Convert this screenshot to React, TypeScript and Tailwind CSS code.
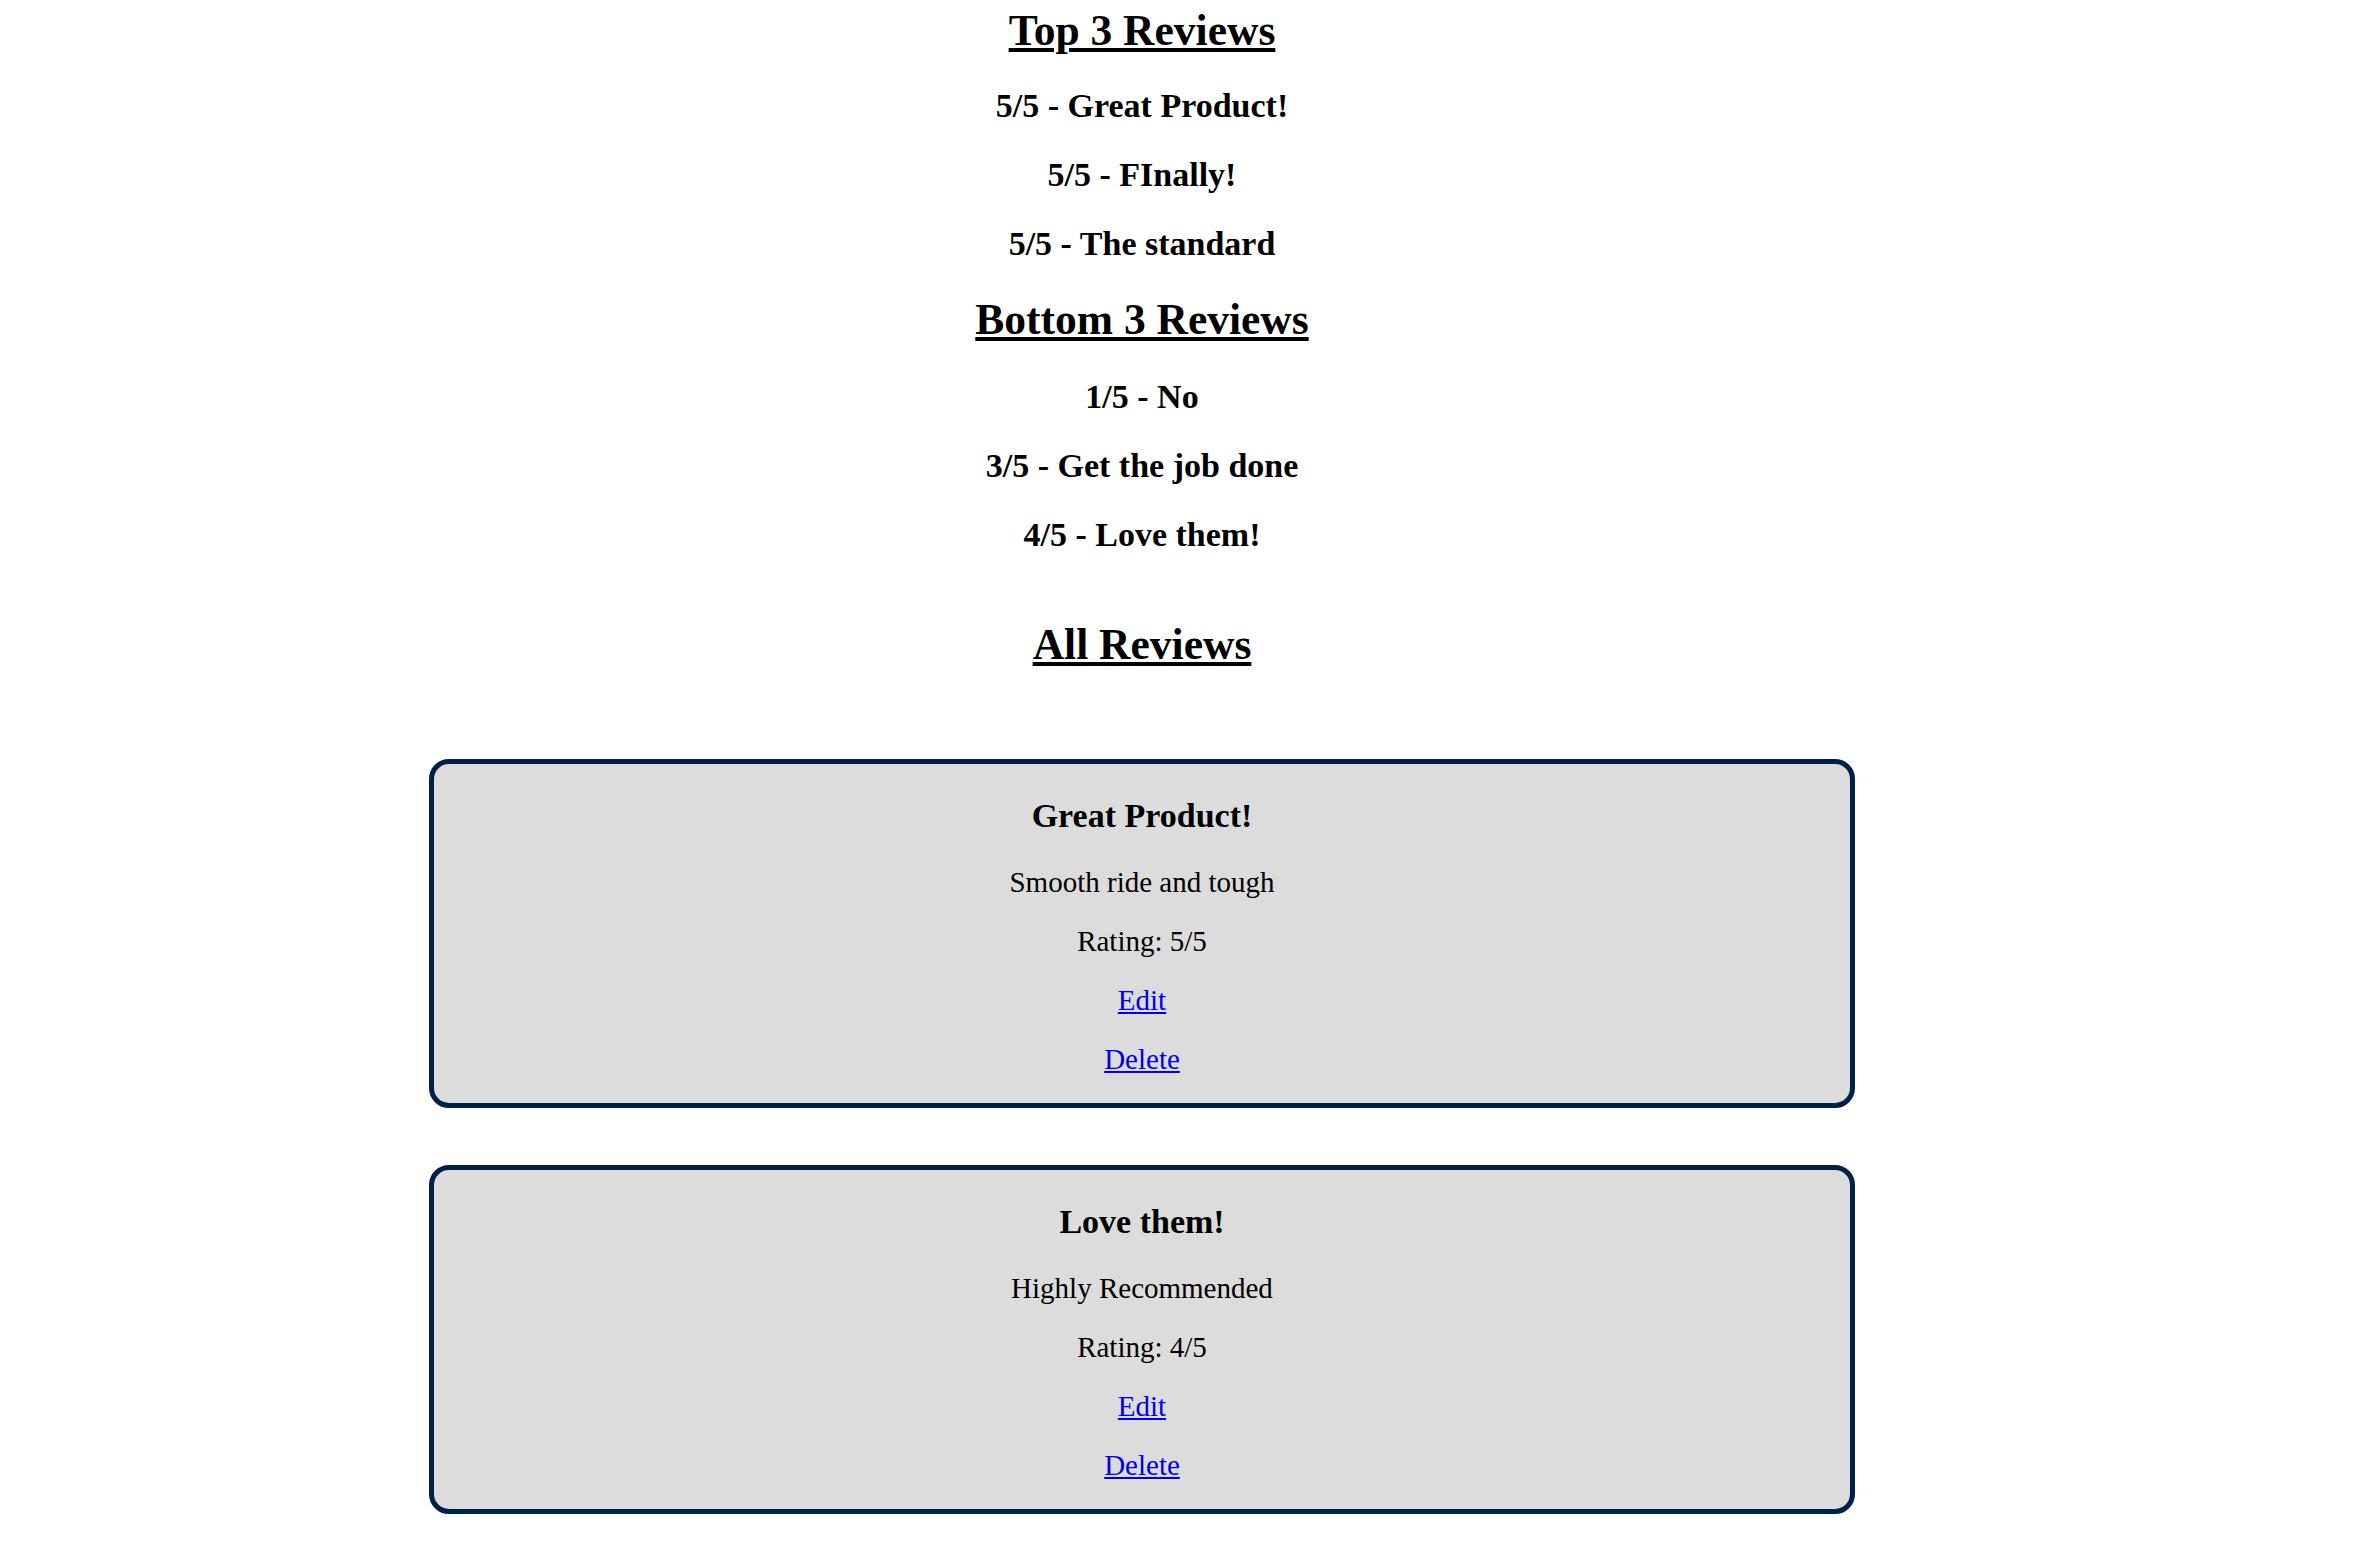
const top = ['5/5 - Great Product!', '5/5 - FInally!', '5/5 - The standard'];
const bottom = ['1/5 - No', '3/5 - Get the job done', '4/5 - Love them!'];

const reviews = [
  { title: 'Great Product!', body: 'Smooth ride and tough', rating: 5 },
  { title: 'Love them!', body: 'Highly Recommended', rating: 4 },
];

function ReviewCard({ title, body, rating }: { title: string; body: string; rating: number }) {
  return (
    <div className="mt-[57px] w-[1426px] rounded-[20px] border-[5px] border-[#002147] bg-[#dcdcdc] text-center">
      <h3 className="mt-[34px] mb-[34px] text-[34px] leading-[35px] font-bold">{title}</h3>
      <p className="my-[29px] text-[29px] leading-[30px]">{body}</p>
      <p className="my-[29px] text-[29px] leading-[30px]">Rating: {rating}/5</p>
      <p className="my-[29px] text-[29px] leading-[30px]">
        <a href="#" className="text-[#0000ee] underline">Edit</a>
      </p>
      <p className="my-[29px] text-[29px] leading-[30px]">
        <a href="#" className="text-[#0000ee] underline">Delete</a>
      </p>
    </div>
  );
}

export default function App() {
  return (
    <div className="min-h-screen bg-white text-black font-['Liberation_Serif','Times_New_Roman',serif]">
      <div className="w-[2284px] flex flex-col items-center pt-[8px] pb-[40px]">
        {/* Top / bottom summaries */}
        <div className="text-center">
          <h2 className="mb-[36px] text-[43.5px] leading-[44px] font-bold underline">Top 3 Reviews</h2>
          {top.map((t) => (
            <h3 key={t} className="my-[34px] text-[34px] leading-[35px] font-bold">{t}</h3>
          ))}
          <h2 className="mt-[36px] mb-[38px] text-[43.5px] leading-[44px] font-bold underline">Bottom 3 Reviews</h2>
          {bottom.map((t) => (
            <h3 key={t} className="my-[34px] text-[34px] leading-[35px] font-bold">{t}</h3>
          ))}
        </div>

        <h2 className="my-[36px] text-[43.5px] leading-[44px] font-bold underline">All Reviews</h2>

        {/* All reviews */}
        {reviews.map((r) => (
          <ReviewCard key={r.title} {...r} />
        ))}
      </div>
    </div>
  );
}
